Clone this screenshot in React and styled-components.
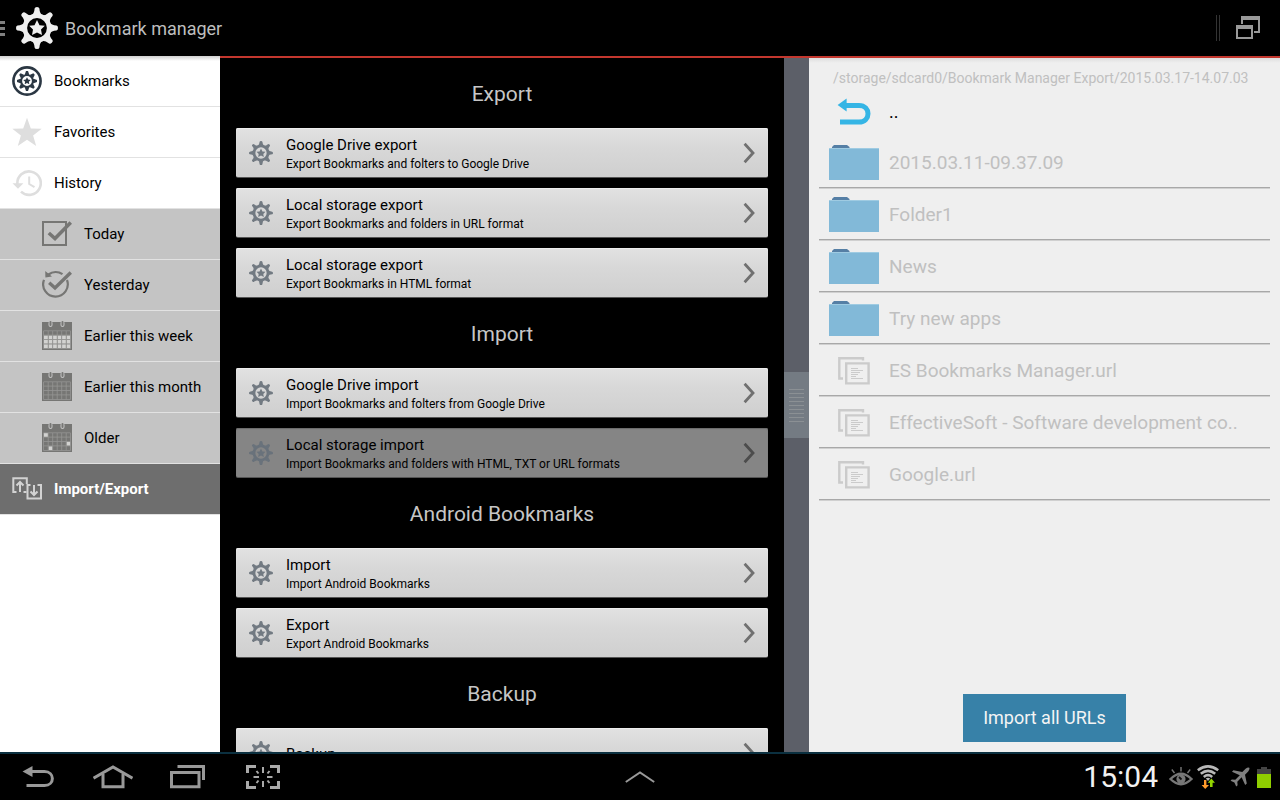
import styled, { createGlobalStyle } from "styled-components";

const menu = [
  { label: "Bookmarks", icon: BookmarksIcon },
  { label: "Favorites", icon: StarIcon },
  { label: "History", icon: HistoryIcon },
  { label: "Today", icon: TodayIcon, sub: true },
  { label: "Yesterday", icon: YesterdayIcon, sub: true },
  { label: "Earlier this week", icon: WeekIcon, sub: true },
  { label: "Earlier this month", icon: CalendarIcon, sub: true },
  { label: "Older", icon: OlderIcon, sub: true },
  { label: "Import/Export", icon: ImportExportIcon, active: true },
];

const sections = [
  {
    title: "Export",
    items: [
      { title: "Google Drive export", text: "Export Bookmarks and folters to Google Drive" },
      { title: "Local storage export", text: "Export Bookmarks and folders in URL format" },
      { title: "Local storage export", text: "Export Bookmarks in HTML format" },
    ],
  },
  {
    title: "Import",
    items: [
      { title: "Google Drive import", text: "Import Bookmarks and folters from Google Drive" },
      {
        title: "Local storage import",
        text: "Import Bookmarks and folders with HTML, TXT or URL formats",
        pressed: true,
      },
    ],
  },
  {
    title: "Android Bookmarks",
    items: [
      { title: "Import", text: "Import Android Bookmarks" },
      { title: "Export", text: "Export Android Bookmarks" },
    ],
  },
  { title: "Backup", items: [{ title: "Backup" }] },
];

const files = [
  { name: "2015.03.11-09.37.09", folder: true },
  { name: "Folder1", folder: true },
  { name: "News", folder: true },
  { name: "Try new apps", folder: true },
  { name: "ES Bookmarks Manager.url" },
  { name: "EffectiveSoft - Software development co.." },
  { name: "Google.url" },
];

export default function App() {
  return (
    <Screen>
      <GlobalStyle />
      <Header>
        <MenuButton aria-label="Menu">
          <span />
          <span />
          <span />
        </MenuButton>
        <GearIcon size={42} color="#efefef" />
        <Title>Bookmark manager</Title>
        <HeaderDivider />
        <HeaderButton aria-label="Windows">
          <WindowsIcon />
        </HeaderButton>
      </Header>
      <Body>
        <Sidebar>
          {menu.map(({ label, icon: Icon, sub, active }) => (
            <MenuItem href="#" key={label} $sub={sub} $active={active}>
              <Icon />
              {label}
            </MenuItem>
          ))}
        </Sidebar>
        <Content>
          <Actions>
            {sections.map((section) => (
              <section key={section.title}>
                <SectionTitle>{section.title}</SectionTitle>
                <CardList>
                  {section.items.map((item, i) => (
                    <Card key={i} $pressed={item.pressed}>
                      <GearIcon size={24} color={item.pressed ? "#69727b" : "#727a82"} />
                      <CardText>
                        <CardTitle>{item.title}</CardTitle>
                        {item.text && <CardDescription>{item.text}</CardDescription>}
                      </CardText>
                      <ChevronIcon color={item.pressed ? "#4c4c4c" : "#707070"} />
                    </Card>
                  ))}
                </CardList>
              </section>
            ))}
          </Actions>
          <Splitter>
            <Handle aria-label="Resize panels">
              {[0, 1, 2, 3, 4, 5, 6, 7, 8].map((n) => (
                <span key={n} />
              ))}
            </Handle>
          </Splitter>
          <Files>
            <Path>/storage/sdcard0/Bookmark Manager Export/2015.03.17-14.07.03</Path>
            <UpButton>
              <FileIcon>
                <UpIcon />
              </FileIcon>
              ..
            </UpButton>
            <FileList>
              {files.map((file) => (
                <li key={file.name}>
                  <FileButton>
                    <FileIcon>{file.folder ? <FolderIcon /> : <UrlIcon />}</FileIcon>
                    <FileName>{file.name}</FileName>
                  </FileButton>
                </li>
              ))}
            </FileList>
            <ImportButton>Import all URLs</ImportButton>
          </Files>
        </Content>
      </Body>
      <SystemBar>
        <SystemKeys>
          <SystemButton aria-label="Back">
            <BackIcon />
          </SystemButton>
          <SystemButton aria-label="Home">
            <HomeIcon />
          </SystemButton>
          <SystemButton aria-label="Recent apps">
            <RecentIcon />
          </SystemButton>
          <SystemButton aria-label="Screenshot">
            <CaptureIcon />
          </SystemButton>
        </SystemKeys>
        <SystemButton aria-label="Open tray">
          <TrayIcon />
        </SystemButton>
        <Status>
          <Clock>15:04</Clock>
          <StatusIcons>
            <EyeIcon />
            <WifiIcon />
            <PlaneIcon />
            <BatteryIcon />
          </StatusIcons>
        </Status>
      </SystemBar>
    </Screen>
  );
}

function GearIcon({ size, color }) {
  return (
    <svg width={size} height={size} viewBox="-21 -21 42 42" fill={color}>
      <circle r="12.2" fill="none" stroke={color} strokeWidth="4.6" />
      {[0, 45, 90, 135, 180, 225, 270, 315].map((angle) => (
        <path
          key={angle}
          transform={`rotate(${angle})`}
          d="M-6 -12Q-2.6 -14.5 -2.4 -19.5Q-2.2 -21 0 -21Q2.2 -21 2.4 -19.5Q2.6 -14.5 6 -12Z"
        />
      ))}
      <path d="M0 -8L2.5 -2.8L7.8 -2.3L4 1.6L5 7L0 4.5L-5 7L-4 1.6L-7.8 -2.3L-2.5 -2.8Z" />
    </svg>
  );
}

function BookmarksIcon() {
  return (
    <svg width="30" height="30" viewBox="-15 -15 30 30" fill="#2b3743">
      <circle r="13.6" fill="#fff" stroke="#2b3743" strokeWidth="2.6" />
      <circle r="5.8" fill="none" stroke="#2b3743" strokeWidth="1.8" />
      {[0, 45, 90, 135, 180, 225, 270, 315].map((angle) => (
        <path key={angle} transform={`rotate(${angle})`} d="M-2.4 -6L-1 -10H1L2.4 -6Z" />
      ))}
      <path d="M0 -3.8L1.2 -1.4L3.7 -1.1L1.9 0.8L2.3 3.3L0 2.1L-2.3 3.3L-1.9 0.8L-3.7 -1.1L-1.2 -1.4Z" />
    </svg>
  );
}

function StarIcon() {
  return (
    <svg width="30" height="30" fill="#dedede">
      <path d="M15 .7L18.8 11.5L29.7 11.7L21.1 18.4L24.2 29L15 22.8L5.8 29L8.9 18.4L.3 11.7L11.2 11.5Z" />
    </svg>
  );
}

function HistoryIcon() {
  return (
    <svg width="30" height="30" fill="none" stroke="#dedede" strokeWidth="2.6">
      <path d="M5.4 16A11.7 11.7 0 1 1 9 23.6" />
      <path d="M17.2 8.5V16L22.5 19.2" strokeWidth="2" />
      <path d="M.5 15.3H11.4L6 20.8Z" fill="#dedede" stroke="none" />
    </svg>
  );
}

function TodayIcon() {
  return (
    <svg width="30" height="30" fill="none" stroke="#767674">
      <path d="M1 3H24V26H1Z" strokeWidth="2" />
      <path d="M6.8 14L13 19.5L28.8 3.5" strokeWidth="3.6" />
    </svg>
  );
}

function YesterdayIcon() {
  return (
    <svg width="30" height="30" fill="none" stroke="#767674">
      <path d="M2 9.8A12.3 12.3 0 1 0 25 10M6.5 4.5A12.3 12.3 0 0 1 20.5 4.2" strokeWidth="2.2" />
      <path d="M3.2 1L3.4 7.6L10 6.4Z" fill="#767674" stroke="none" />
      <path d="M7.2 12.8L13 18L28.8 2.5" strokeWidth="3.4" />
    </svg>
  );
}

function CalendarIcon({ light = [] }) {
  return (
    <svg width="30" height="30">
      <path d="M0 1H30V29H0Z" fill="#767674" />
      {light.map(([col, row]) => (
        <rect key={`${col}-${row}`} x={2 + col * 4.5} y={10 + row * 4.4} width="4" height="4" fill="#d2d2d0" />
      ))}
      <path
        d="M1.5 9.8H28.5M1.5 14.1H28.5M1.5 18.5H28.5M1.5 22.9H28.5M6.2 10V27.5M10.7 10V27.5M15.2 10V27.5M19.7 10V27.5M24.2 10V27.5M1.5 10V27.5H28.5V10"
        stroke="#969694"
        strokeWidth=".8"
        fill="none"
      />
      {[8.5, 20.5].map((x) => (
        <g key={x}>
          <rect x={x - 2} y="0" width="4" height="6" rx="2" fill="#c4c4c4" />
          <rect x={x - 1} y="0" width="2" height="5" rx="1" fill="#767674" />
        </g>
      ))}
    </svg>
  );
}

function WeekIcon() {
  const cells = [1, 2, 3].flatMap((row) => [0, 1, 2, 3, 4, 5].map((col) => [col, row]));
  return <CalendarIcon light={cells} />;
}

function OlderIcon() {
  return <CalendarIcon light={[[0, 0], [5, 2], [1, 3]]} />;
}

function ImportExportIcon() {
  return (
    <svg width="30" height="30" fill="none" stroke="#d2d2d2" strokeWidth="2">
      <path d="M4.5 18H1.3V4.3H14.8V10M11.5 18H14.5" />
      <path d="M18.5 11H15.5V24.5H29V11H25.5" />
      <path d="M8 18V8.5M4.5 11.5L8 8L11.5 11.5M22 11V20.5M18.5 17.5L22 21L25.5 17.5" />
    </svg>
  );
}

function ChevronIcon({ color }) {
  return (
    <svg width="12" height="22" fill="none" stroke={color} strokeWidth="2.8">
      <path d="M1.6 1.8L10 11L1.6 20.2" />
    </svg>
  );
}

function WindowsIcon() {
  return (
    <svg width="24" height="24" fill="#999">
      <path d="M5 0H24V17H18V15H22V4H7V8H5Z" />
      <path fillRule="evenodd" d="M0 9H17V23H0ZM2 13V21H15V13Z" />
    </svg>
  );
}

function UpIcon() {
  return (
    <svg width="34" height="27" fill="none" stroke="#35b5e5" strokeWidth="5">
      <path d="M8 7.5H22C34 7.5 34 24 22 24H3" />
      <path d="M.6 7L9.6 .5V13.5Z" fill="#35b5e5" stroke="none" />
    </svg>
  );
}

function FolderIcon() {
  return (
    <svg width="50" height="35">
      <path d="M3 5V2L5 0H18L20.5 2V5Z" fill="#557fa5" />
      <path d="M0 3H50V35H0Z" fill="#82b9d8" />
      <path d="M0 3.5H50" stroke="#9fcbe2" />
    </svg>
  );
}

function UrlIcon() {
  return (
    <svg width="32" height="28" fill="none" stroke="#cbcbcb" strokeWidth="2.4">
      <path d="M5 21.5H1.3V1.3H25V3.5" />
      <path d="M8.2 6.4H30.6V26.4H8.2Z" />
      <path d="M13 11.5H20M13 13.5H25M13 15.5H22M13 17.5H20M13 19.5H18M13 21.5H25" strokeWidth="1" />
    </svg>
  );
}

function BackIcon() {
  return (
    <svg width="32" height="22" fill="none" stroke="#999" strokeWidth="3">
      <path d="M9 5.5H22.5C33 5.5 33 19.5 22.5 19.5H4.5" />
      <path d="M.5 5.5L10.5 0V11Z" fill="#999" stroke="none" />
    </svg>
  );
}

function HomeIcon() {
  return (
    <svg width="40" height="24" fill="none" stroke="#999" strokeWidth="3">
      <path d="M.5 13.2L20 2L39.5 13.2" />
      <path d="M10 9V21.8H30V9" />
    </svg>
  );
}

function RecentIcon() {
  return (
    <svg width="36" height="24" fill="none" stroke="#999" strokeWidth="3">
      <path d="M1.5 7.5H29V21.8H1.5Z" />
      <path d="M7.5 1.5H33.5V15" />
    </svg>
  );
}

function CaptureIcon() {
  return (
    <svg width="34" height="24" fill="none" stroke="#aaa" strokeWidth="3">
      <path d="M1.5 8V1.5H10M24 1.5H32.5V8M32.5 16V22.5H24M10 22.5H1.5V16" />
      <path
        d="M17 2V8M17 16V22M7.5 12H13M21 12H26.5M10.5 6L12.5 8.5M23.5 6L21.5 8.5M10.5 18L12.5 15.5M23.5 18L21.5 15.5"
        strokeWidth="2"
      />
    </svg>
  );
}

function TrayIcon() {
  return (
    <svg width="30" height="12" fill="none" stroke="#999" strokeWidth="2">
      <path d="M.8 11L15 1.5L29.2 11" />
    </svg>
  );
}

function EyeIcon() {
  return (
    <svg width="24" height="20" fill="none" stroke="#777" strokeWidth="2">
      <path d="M1.5 12Q12 1.5 22.5 12Q12 22.5 1.5 12Z" strokeWidth="2.4" />
      <circle cx="12" cy="12" r="4.6" fill="#777" stroke="none" />
      <path d="M10 10L12.5 12.5" stroke="#111" strokeWidth="1.8" />
      <path d="M2.8 2.5L5.5 6M12 0V4.5M21.2 2.5L18.5 6" strokeWidth="1.4" />
    </svg>
  );
}

function WifiIcon() {
  return (
    <svg width="22" height="24" fill="none" stroke="#b8b8b8" strokeWidth="2.6">
      <path d="M.8 5.2Q11 -2.4 21.2 5.2M3.8 8.8Q11 3 18.2 8.8M6.8 12Q11 8.4 15.2 12" />
      <path d="M8.8 13.6Q11 12 13.2 13.6L11 16Z" fill="#b8b8b8" stroke="none" />
      <path d="M7 15H9.4V20H12L8.2 24L4.6 20H7Z" fill="#ff9a2b" stroke="none" />
      <path d="M13 22V17.8H10.8L14.4 13.6L18 17.8H15.6V22Z" fill="#93d500" stroke="none" />
    </svg>
  );
}

function PlaneIcon() {
  return (
    <svg width="20" height="20" viewBox="0 0 20 20" fill="#808080">
      <path d="M19.3 .8Q18 -.2 15.6 1.8L12.3 5L3.4 3.2L2 4.8L9.8 8.2L5.3 12.8L1.8 12.4L.6 13.8L4.4 15.6L6.2 19.4L7.6 18.2L7.3 14.8L11.6 10.2L15.2 18L16.8 16.6L15 7.8L18.2 4.5Q20 2.1 19.3 .8Z" />
    </svg>
  );
}

function BatteryIcon() {
  return (
    <svg width="14" height="21">
      <path d="M4 0H10V2H14V7H0V2H4Z" fill="#444" />
      <path d="M0 7H14V21H0Z" fill="#8fce00" />
    </svg>
  );
}

const GlobalStyle = createGlobalStyle`
  * {
    box-sizing: border-box;
  }

  body {
    margin: 0;
    background-color: #000000;
    font-family: Roboto, "Liberation Sans", sans-serif;
  }

  button {
    border: none;
    padding: 0;
    background: none;
    font-family: inherit;
    text-align: left;
    cursor: pointer;
  }

  svg {
    display: block;
    flex-shrink: 0;
  }
`;

const Screen = styled.div`
  height: 100vh;
  display: flex;
  flex-direction: column;
  overflow: hidden;
`;

const Header = styled.header`
  height: 56px;
  display: flex;
  align-items: center;
  padding-right: 20px;
  flex-shrink: 0;
  background-color: #000000;
`;

const MenuButton = styled.button`
  width: 5px;
  margin-right: 11px;
  display: flex;
  flex-direction: column;
  gap: 3px;

  span {
    height: 3px;
    background-color: #808080;
  }
`;

const Title = styled.h1`
  margin: 0 auto 0 7px;
  padding-top: 2px;
  font-weight: 400;
  font-size: 18px;
  line-height: 24px;
  color: #bebebe;
`;

const HeaderDivider = styled.div`
  width: 4px;
  height: 26px;
  margin-right: 16px;
  border-left: 1px solid #333333;
  border-right: 1px solid #333333;
`;

const HeaderButton = styled.button`
  display: flex;
`;

const Body = styled.div`
  flex: 1;
  min-height: 0;
  display: flex;
`;

const Sidebar = styled.nav`
  width: 220px;
  flex-shrink: 0;
  background: linear-gradient(#d0d0d0, #ffffff 5px);
`;

const MenuItem = styled.a`
  height: 51px;
  display: flex;
  align-items: center;
  gap: 12px;
  padding-left: ${(props) => (props.$sub ? "42px" : "12px")};
  border-bottom: 1px solid #e2e2e2;
  background-color: ${(props) =>
    props.$active ? "#6e6e6e" : props.$sub ? "#c4c4c4" : "transparent"};
  color: ${(props) => (props.$active ? "#ffffff" : "#000000")};
  font-weight: ${(props) => (props.$active ? 700 : 400)};
  font-size: 15px;
  line-height: 20px;
  text-decoration: none;
`;

const Content = styled.main`
  flex: 1;
  min-width: 0;
  display: grid;
  grid-template-columns: minmax(0, 564fr) 25px minmax(0, 471fr);
  grid-template-rows: minmax(0, 1fr);
  border-top: 2px solid #c3372e;
`;

const Actions = styled.div`
  padding: 0 16px;
  overflow: hidden;
  background-color: #000000;
`;

const SectionTitle = styled.h2`
  margin: 0;
  padding: 23px 0 21px;
  font-weight: 400;
  font-size: 21px;
  line-height: 26px;
  text-align: center;
  color: #c6c6c6;
`;

const CardList = styled.div`
  display: flex;
  flex-direction: column;
  gap: 10px;
`;

const Card = styled.button`
  height: 50px;
  display: flex;
  align-items: center;
  padding: 0 13px;
  border-radius: 2px;
  border-bottom: 1px solid #555555;
  background: ${(props) =>
    props.$pressed ? "#858585" : "linear-gradient(#e2e2e2, #d8d8d8 40%, #cfcfcf)"};
  color: #000000;
  box-shadow: inset 0 1px 1px
    ${(props) => (props.$pressed ? "#6a6a6a" : "#f0f0f0")};
`;

const CardText = styled.span`
  flex: 1;
  display: flex;
  flex-direction: column;
  padding: 3px 0 0 13px;
`;

const CardTitle = styled.span`
  font-size: 15px;
  line-height: 20px;
`;

const CardDescription = styled.span`
  font-size: 12px;
  line-height: 18px;
`;

const Splitter = styled.div`
  display: flex;
  align-items: center;
  background-color: #5c5f68;
`;

const Handle = styled.button`
  width: 100%;
  height: 66px;
  display: flex;
  flex-direction: column;
  align-items: center;
  justify-content: center;
  gap: 3px;
  background-color: #747b83;

  span {
    width: 15px;
    height: 1px;
    background-color: #8b9094;
  }
`;

const Files = styled.div`
  display: flex;
  flex-direction: column;
  padding: 12px 10px 10px;
  background: linear-gradient(#dedede, #efefef 5px);
`;

const Path = styled.p`
  margin: 0;
  padding-left: 14px;
  font-size: 14px;
  line-height: 16px;
  white-space: nowrap;
  color: #c0c0c0;
`;

const UpButton = styled.button`
  height: 51px;
  display: flex;
  align-items: center;
  gap: 10px;
  padding: 0 10px;
  font-size: 18px;
  color: #000000;
`;

const FileList = styled.ul`
  margin: 0;
  padding: 0;
  list-style: none;
`;

const FileButton = styled.button`
  width: 100%;
  height: 52px;
  display: flex;
  align-items: center;
  gap: 10px;
  padding: 0 10px;
  border-bottom: 1px solid #d0d0d0;
  box-shadow: inset 0 -1px 0 #a8a8a8;
`;

const FileIcon = styled.span`
  width: 50px;
  display: flex;
  justify-content: center;
  flex-shrink: 0;
`;

const FileName = styled.span`
  font-size: 19px;
  line-height: 24px;
  white-space: nowrap;
  color: #c0c0c0;
`;

const ImportButton = styled.button`
  align-self: center;
  margin-top: auto;
  padding: 12px 20px;
  background-color: #3781a8;
  font-size: 18px;
  line-height: 24px;
  color: #f4f4f4;
`;

const SystemBar = styled.footer`
  height: 48px;
  flex-shrink: 0;
  display: grid;
  grid-template-columns: 1fr auto 1fr;
  border-top: 2px solid #0b3040;
  background-color: #000000;
`;

const SystemKeys = styled.div`
  display: flex;
`;

const SystemButton = styled.button`
  width: 75px;
  display: flex;
  align-items: center;
  justify-content: center;
`;

const Status = styled.div`
  display: flex;
  align-items: center;
  justify-content: flex-end;
  padding-right: 9px;
`;

const Clock = styled.time`
  margin-right: 11px;
  font-size: 30px;
  line-height: 36px;
  color: #f2f2f2;
`;

const StatusIcons = styled.div`
  display: flex;
  align-items: center;

  svg:nth-child(2) {
    margin: 0 11px 0 4px;
  }

  svg:nth-child(4) {
    margin-left: 7px;
  }
`;
